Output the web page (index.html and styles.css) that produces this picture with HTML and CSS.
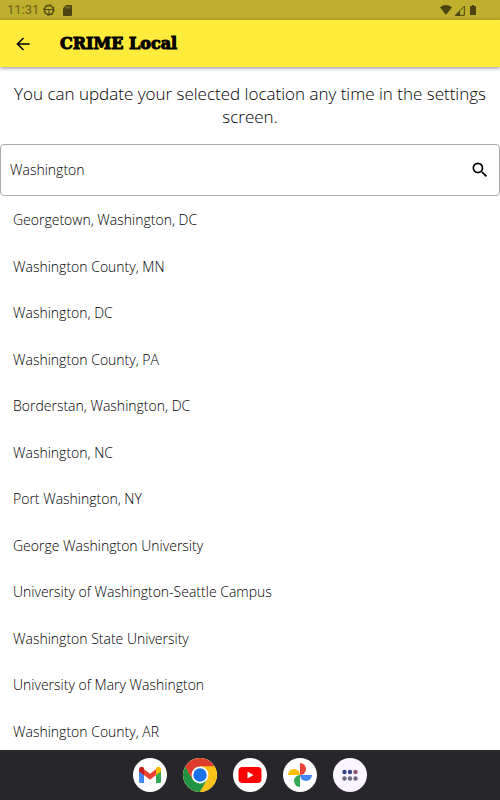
FILE: index.html
```
<!DOCTYPE html>
<html lang="en">
<head>
<meta charset="utf-8">
<meta name="viewport" content="width=device-width, initial-scale=1">
<title>CRIME Local</title>
<link rel="stylesheet" href="styles.css">
</head>
<body>
<div class="status">
  <span class="clock">11:31</span>
  <svg class="status-icon" width="12" height="12" viewBox="0 0 12 12" aria-hidden="true"><g fill="none" stroke="currentColor"><circle cx="6" cy="6" r="4.500" stroke-width="1.400"/><circle cx="6" cy="6" r="5.400" stroke-width="1" stroke-dasharray="1.400 2.840"/><path d="M2 5.500h8M6 6v4" stroke-width="1"/></g></svg>
  <svg class="status-icon card-icon" width="9" height="11" viewBox="0 0 9 11" aria-hidden="true"><path fill="currentColor" d="M3.200 0H8q1 0 1 1v9q0 1-1 1H1q-1 0-1-1V3.200z"/><path stroke="#b9aa2b" stroke-width=".7" d="M3.200 1.500v2M5 1.500v2M6.800 1.500v2"/></svg>
  <span class="signals">
    <svg width="12" height="10" viewBox="0 0 12 10" aria-hidden="true"><path fill="currentColor" d="M0 2.200Q6-2 12 2.200L6 10z"/></svg>
    <svg width="11" height="11" viewBox="0 0 11 11" aria-hidden="true"><path fill="none" stroke="currentColor" d="M10.300 1.200v9.200H1.200z"/><path fill="currentColor" d="M6 5.500v5H1z"/></svg>
    <svg class="battery" width="6" height="10" viewBox="0 0 6 10" aria-hidden="true"><path fill="currentColor" d="M2 0h2v1h2v9H0V1h2z"/></svg>
  </span>
</div>
<header class="appbar">
  <button class="icon-button" type="button" aria-label="Back">
    <svg width="20" height="20" viewBox="0 0 24 24" aria-hidden="true"><path fill="currentColor" d="M20 11.200H7.500l5.700-5.700L12 4.300l-8 7.700 8 7.700 1.200-1.200-5.700-5.700H20z"/></svg>
  </button>
  <h1>CRIME Local</h1>
</header>
<main>
  <p class="hint">You can update your selected location any time in the settings screen.</p>
  <form class="search">
    <input type="text" value="Washington" aria-label="Location">
    <button class="icon-button" type="button" aria-label="Search">
      <svg width="20" height="20" viewBox="0 0 24 24" aria-hidden="true"><path fill="currentColor" d="M15.500 14h-.79l-.28-.27A6.470 6.470 0 0 0 16 9.500 6.500 6.500 0 1 0 9.500 16c1.610 0 3.090-.59 4.230-1.570l.27.28v.79l5 4.990L20.490 19zm-6 0C7.010 14 5 11.990 5 9.500S7.010 5 9.500 5 14 7.010 14 9.500 11.990 14 9.500 14z"/></svg>
    </button>
  </form>
  <ul class="results">
    <li>Georgetown, Washington, DC</li>
    <li>Washington County, MN</li>
    <li>Washington, DC</li>
    <li>Washington County, PA</li>
    <li>Borderstan, Washington, DC</li>
    <li>Washington, NC</li>
    <li>Port Washington, NY</li>
    <li>George Washington University</li>
    <li>University of Washington-Seattle Campus</li>
    <li>Washington State University</li>
    <li>University of Mary Washington</li>
    <li>Washington County, AR</li>
  </ul>
</main>
<nav class="dock" aria-label="Apps">
  <button type="button" aria-label="Gmail">
    <svg viewBox="0 0 34 34" aria-hidden="true"><path fill="#4285f4" d="M6 12l5 3.500V25H7.500Q6 25 6 23.500z"/><path fill="#34a853" d="M28 12l-5 3.500V25h3.500q1.500 0 1.500-1.500z"/><path fill="#ea4335" d="M10.500 10.800L17 15.700l6.500-4.900v6L17 21.700l-6.500-4.900z"/><path fill="#c5221f" d="M6 11.500c0-2.600 2.700-3.500 4.500-2l.5.500v7.200l-5-3.700z"/><path fill="#fbbc04" d="M28 11.500c0-2.600-2.700-3.500-4.500-2l-.5.500v7.200l5-3.700z"/></svg>
  </button>
  <button type="button" aria-label="Chrome">
    <svg viewBox="0 0 34 34" aria-hidden="true"><circle cx="17" cy="17" r="17" fill="#fbbc04"/><path fill="#229342" d="M2.280 8.500A17 17 0 0 0 17 34l7.360-12.750L17 25.500 9.640 21.250z"/><path fill="#dd3c2e" d="M2.280 8.500A17 17 0 0 1 31.720 8.500H17L9.640 21.250z"/><path fill="#fbc21a" d="M31.720 8.500A17 17 0 0 1 17 34l7.360-12.750L17 8.500z"/><circle cx="17" cy="17" r="8.500" fill="#fff"/><circle cx="17" cy="17" r="6.700" fill="#1a73e8"/></svg>
  </button>
  <button type="button" aria-label="YouTube">
    <svg viewBox="0 0 34 34" aria-hidden="true"><rect x="5.500" y="9" width="23" height="16" rx="4" fill="#f00"/><path fill="#fff" d="M14.500 13.500v7l6-3.500z"/></svg>
  </button>
  <button type="button" aria-label="Photos">
    <svg viewBox="0 0 34 34" aria-hidden="true"><path fill="#ea4335" d="M17 5a6 6 0 0 1 0 12z"/><path fill="#4285f4" d="M29 17a6 6 0 0 1-12 0z"/><path fill="#34a853" d="M17 29a6 6 0 0 1 0-12z"/><path fill="#fbbc04" d="M5 17a6 6 0 0 1 12 0z"/></svg>
  </button>
  <button type="button" class="all-apps" aria-label="All apps">
    <svg viewBox="0 0 34 34" aria-hidden="true"><g fill="#6b6a80"><circle cx="11.500" cy="20.500" r="2.200"/><circle cx="17" cy="20.500" r="2.200"/><circle cx="22.500" cy="20.500" r="2.200"/></g><g fill="#38438c"><circle cx="11.500" cy="14" r="2.200"/><circle cx="17" cy="14" r="2.200"/></g><circle cx="22.500" cy="14" r="2.200" fill="#86566e"/></svg>
  </button>
</nav>
</body>
</html>
```
FILE: styles.css
```
* { box-sizing: border-box; }
body {
  margin: 0;
  height: 100vh;
  display: flex;
  flex-direction: column;
  overflow: hidden;
  background: #fff;
  color: #000;
  font-family: "Open Sans", sans-serif;
  font-weight: 300;
}
svg { display: block; }
button { border: 0; padding: 0; background: none; color: inherit; }
.status {
  display: flex;
  align-items: center;
  flex: none;
  height: 20px;
  padding: 0 24px 0 7px;
  background: #beaf2c;
  color: #4b4513;
}
.clock { font: 13px/20px Roboto, sans-serif; color: #6b611b; }
.status-icon { margin-left: 4px; }
.card-icon { margin-left: 8px; }
.signals { display: flex; align-items: center; gap: 2px; margin-left: auto; }
.battery { margin-left: 3px; }
.appbar {
  display: flex;
  align-items: center;
  flex: none;
  height: 47px;
  padding: 0 13px;
  gap: 27px;
  background: #ffeb3b;
  color: #000;
  box-shadow: 0 1px 4px rgba(0, 0, 0, .45);
}
.icon-button { flex: none; }
h1 {
  margin: 0;
  font: 900 16px/24px "DejaVu Serif", serif;
  -webkit-text-stroke: 1px currentColor;
}
main { display: flex; flex-direction: column; flex: 1; min-height: 0; }
.hint {
  margin: 15px 0 16px;
  padding: 0 8px;
  font-size: 17px;
  line-height: 23px;
  text-align: center;
}
.search {
  display: flex;
  align-items: center;
  height: 52px;
  flex: none;
  margin: 0;
  padding: 0 9px;
  border: 1px solid #aaa;
  border-radius: 4px;
}
.search input {
  flex: 1;
  min-width: 0;
  border: 0;
  padding: 0;
  outline: 0;
  background: none;
  color: inherit;
  font: 300 14px/20px "Open Sans", sans-serif;
}
.results {
  flex: 1;
  display: flex;
  flex-direction: column;
  justify-content: space-between;
  margin: 0;
  padding: 14px 13px 8px;
  list-style: none;
  font-size: 14px;
  line-height: 20px;
}
.dock {
  display: flex;
  flex: none;
  align-items: center;
  justify-content: center;
  gap: 16px;
  height: 50px;
  background: #26262b;
}
.dock button { width: 34px; height: 34px; border-radius: 50%; background: #fff; overflow: hidden; }
.dock .all-apps { background: #fbf5ff; }
```
